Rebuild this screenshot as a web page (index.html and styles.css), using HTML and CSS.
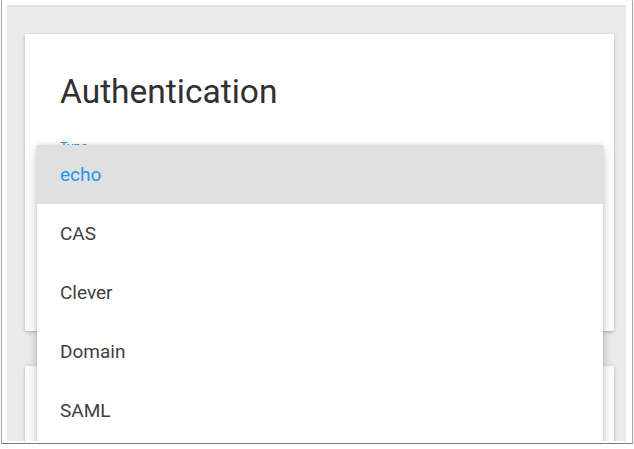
FILE: index.html
```html
<!DOCTYPE html>
<html>
<head>
<meta charset="utf-8">
<link rel="stylesheet" href="styles.css">
</head>
<body>
<div class="shot">
  <div class="canvas">
    <section class="card card-main">
      <h1 class="title">Authentication</h1>
      <div class="field-label">Type</div>
    </section>
    <section class="card card-second"></section>
    <ul class="menu">
      <li class="menu-item selected">echo</li>
      <li class="menu-item">CAS</li>
      <li class="menu-item">Clever</li>
      <li class="menu-item">Domain</li>
      <li class="menu-item">SAML</li>
    </ul>
  </div>
</div>
</body>
</html>
```

FILE: styles.css
```css
html, body {
  margin: 0;
  padding: 0;
  background: #ffffff;
  font-family: Roboto, "Liberation Sans", sans-serif;
}

.shot {
  box-sizing: border-box;
  width: 632px;
  height: 444px;
  margin-left: 1px;
  padding: 5px 6px 2px 5px;
  border-left: 1px solid #a8a8a8;
  border-right: 1px solid #a8a8a8;
  border-bottom: 1px solid #7a7a7a;
  box-shadow: 0 2px 1px rgba(0, 0, 0, 0.12);
  background: #ffffff;
}

.canvas {
  box-sizing: border-box;
  position: relative;
  height: 436px;
  background: #ebebeb;
  overflow: hidden;
  padding: 29px 12px 0 18px;
  box-shadow: inset 0 3px 3px -2px rgba(0, 0, 0, 0.08);
}

.card {
  background: #ffffff;
  box-shadow: 0 1px 4px rgba(0, 0, 0, 0.18), 0 1px 2px rgba(0, 0, 0, 0.1);
  border-radius: 2px;
}

.card-main {
  box-sizing: border-box;
  height: 297px;
  padding: 37px 35px 0 35px;
}

.card-second {
  height: 120px;
  margin-top: 35px;
}

.title {
  margin: 0;
  font-size: 33.5px;
  font-weight: 400;
  line-height: 42px;
  color: #303030;
}

.field-label {
  margin-top: 26px;
  font-size: 13px;
  color: #2196f3;
}

.menu {
  position: absolute;
  left: 30px;
  top: 140px;
  width: 566px;
  margin: 0;
  padding: 0 0 60px 0;
  list-style: none;
  background: #ffffff;
  box-shadow: 0 4px 12px rgba(0, 0, 0, 0.2), 0 1px 4px rgba(0, 0, 0, 0.12);
}

.menu-item {
  height: 59px;
  line-height: 59px;
  padding-left: 23px;
  font-size: 19px;
  color: #404040;
}

.menu-item.selected {
  background: #e0e0e0;
  color: #2196f3;
}
```
